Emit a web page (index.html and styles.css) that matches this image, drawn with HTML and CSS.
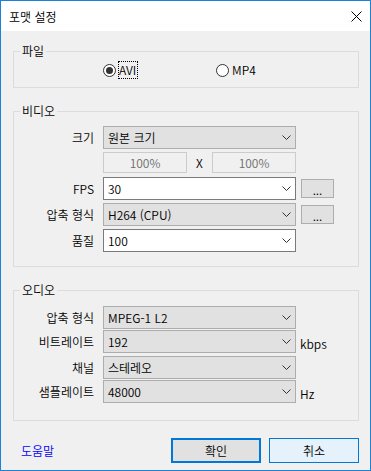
FILE: index.html
```html
<!DOCTYPE html>
<html lang="ko">
<head>
    <meta charset="UTF-8">
    <title>포맷 설정</title>
    <link rel="stylesheet" href="styles.css">
</head>
<body>
    <div class="window">
        <div class="titlebar">
            <span class="title">포맷 설정</span>
            <svg class="close" width="11" height="11" viewBox="0 0 11 11">
                <path d="M0.5 0.5 L10.5 10.5 M10.5 0.5 L0.5 10.5" stroke="#000" stroke-width="1" fill="none"/>
            </svg>
        </div>

        <div class="content">
            <fieldset class="group group-file">
                <legend>파일</legend>
                <div class="radio-row">
                    <label class="radio checked"><span class="radio-dot"></span><span class="radio-text focus">AVI</span></label>
                    <label class="radio"><span class="radio-dot"></span><span class="radio-text">MP4</span></label>
                </div>
            </fieldset>

            <fieldset class="group group-video">
                <legend>비디오</legend>
                <div class="form-grid">
                    <span class="lbl">크기</span>
                    <div class="combo">원본 크기<svg class="chev" width="9" height="5" viewBox="0 0 9 5"><path d="M0.5 0.5 L4.5 4.5 L8.5 0.5" stroke="#333" fill="none"/></svg></div>
                    <span></span>

                    <span></span>
                    <div class="size-row">
                        <div class="field">100%</div>
                        <span class="x">X</span>
                        <div class="field">100%</div>
                    </div>
                    <span></span>

                    <span class="lbl">FPS</span>
                    <div class="combo white">30<svg class="chev" width="9" height="5" viewBox="0 0 9 5"><path d="M0.5 0.5 L4.5 4.5 L8.5 0.5" stroke="#333" fill="none"/></svg></div>
                    <button class="more">...</button>

                    <span class="lbl">압축 형식</span>
                    <div class="combo">H264 (CPU)<svg class="chev" width="9" height="5" viewBox="0 0 9 5"><path d="M0.5 0.5 L4.5 4.5 L8.5 0.5" stroke="#333" fill="none"/></svg></div>
                    <button class="more">...</button>

                    <span class="lbl">품질</span>
                    <div class="combo white">100<svg class="chev" width="9" height="5" viewBox="0 0 9 5"><path d="M0.5 0.5 L4.5 4.5 L8.5 0.5" stroke="#333" fill="none"/></svg></div>
                    <span></span>
                </div>
            </fieldset>

            <fieldset class="group group-audio">
                <legend>오디오</legend>
                <div class="form-grid audio-grid">
                    <span class="lbl">압축 형식</span>
                    <div class="combo">MPEG-1 L2<svg class="chev" width="9" height="5" viewBox="0 0 9 5"><path d="M0.5 0.5 L4.5 4.5 L8.5 0.5" stroke="#333" fill="none"/></svg></div>
                    <span></span>

                    <span class="lbl">비트레이트</span>
                    <div class="combo">192<svg class="chev" width="9" height="5" viewBox="0 0 9 5"><path d="M0.5 0.5 L4.5 4.5 L8.5 0.5" stroke="#333" fill="none"/></svg></div>
                    <span class="unit">kbps</span>

                    <span class="lbl">채널</span>
                    <div class="combo">스테레오<svg class="chev" width="9" height="5" viewBox="0 0 9 5"><path d="M0.5 0.5 L4.5 4.5 L8.5 0.5" stroke="#333" fill="none"/></svg></div>
                    <span></span>

                    <span class="lbl">샘플레이트</span>
                    <div class="combo">48000<svg class="chev" width="9" height="5" viewBox="0 0 9 5"><path d="M0.5 0.5 L4.5 4.5 L8.5 0.5" stroke="#333" fill="none"/></svg></div>
                    <span class="unit">Hz</span>
                </div>
            </fieldset>
        </div>

        <div class="footer">
            <a class="help" href="#">도움말</a>
            <div class="buttons">
                <button class="btn primary">확인</button>
                <button class="btn">취소</button>
            </div>
        </div>
    </div>
</body>
</html>
```

FILE: styles.css
```css
* {
    box-sizing: border-box;
}

body {
    margin: 0;
    font-family: "Noto Sans CJK KR", "Noto Sans", sans-serif;
    font-size: 12px;
    font-weight: 350;
    color: #000;
    background: #ffffff;
}

.window {
    width: 371px;
    height: 471px;
    border: 1px solid #1883d7;
    background: #f0f0f0;
    display: flex;
    flex-direction: column;
}

.titlebar {
    height: 30px;
    background: #ffffff;
    display: flex;
    align-items: center;
    justify-content: space-between;
    padding: 0 8px 0 8px;
}

.close {
    display: block;
}

.content {
    padding: 13px 11px 0 12px;
}

/* group boxes */
.group {
    margin: 0;
    padding: 0;
    min-width: 0;
    border: 1px solid #dcdcdc;
}

.group legend {
    padding: 0 2px;
    margin-left: 6px;
    line-height: 14px;
}

.group + .group {
    margin-top: 16px;
}

/* radio buttons */
.radio-row {
    display: flex;
    align-items: center;
    height: 18px;
    margin: 3px 0 8px 89px;
}

.radio {
    display: flex;
    align-items: center;
    gap: 2px;
}

.radio:first-child {
    width: 113px;
}

.radio-dot {
    width: 13px;
    height: 13px;
    border: 1px solid #333;
    border-radius: 50%;
    background: #fff;
    display: flex;
    align-items: center;
    justify-content: center;
}

.checked .radio-dot::after {
    content: "";
    width: 7px;
    height: 7px;
    border-radius: 50%;
    background: #333;
}

.radio-text {
    border: 1px dotted transparent;
    padding: 0 1px 0 0;
    line-height: 16px;
}

.radio-text.focus {
    border-color: #000;
}

/* form rows */
.form-grid {
    display: grid;
    grid-template-columns: 89px 193px auto;
    row-gap: 3px;
    align-items: start;
    padding: 8px 0 14px;
}

.audio-grid {
    row-gap: 1px;
    padding: 9px 0 15px;
}

.lbl {
    text-align: right;
    padding-right: 9px;
    line-height: 23px;
}

.combo {
    height: 23px;
    border: 1px solid #adadad;
    background: #e1e1e1;
    display: flex;
    align-items: center;
    justify-content: space-between;
    padding: 0 4px;
}

.combo.white {
    background: #ffffff;
    border-color: #7a7a7a;
}

.chev {
    display: block;
}

.size-row {
    display: flex;
    align-items: center;
    height: 21px;
    margin-bottom: 1px;
}

.field {
    width: 84px;
    height: 21px;
    border: 1px solid #cccccc;
    color: #6d6d6d;
    text-align: center;
    line-height: 19px;
}

.x {
    width: 25px;
    text-align: center;
}

.more {
    margin: 2px 0 0 5px;
    width: 33px;
    height: 19px;
    border: 1px solid #adadad;
    background: #e1e1e1;
    font: inherit;
    line-height: 19px;
    padding: 0;
    color: #000;
}

.unit {
    margin-left: 4px;
    line-height: 23px;
    padding-top: 2px;
}

/* bottom bar */
.footer {
    display: flex;
    align-items: center;
    justify-content: space-between;
    margin-top: 17px;
    padding: 0 11px 0 20px;
}

.help {
    color: #0000ff;
    text-decoration: none;
}

.buttons {
    display: flex;
    gap: 8px;
}

.btn {
    width: 90px;
    height: 25px;
    border: 1px solid #0078d7;
    background: #e5f1fb;
    font: inherit;
    color: #000;
    padding: 0;
}

.btn.primary {
    border: 2px solid #0078d7;
    background: #e1e1e1;
}
```
